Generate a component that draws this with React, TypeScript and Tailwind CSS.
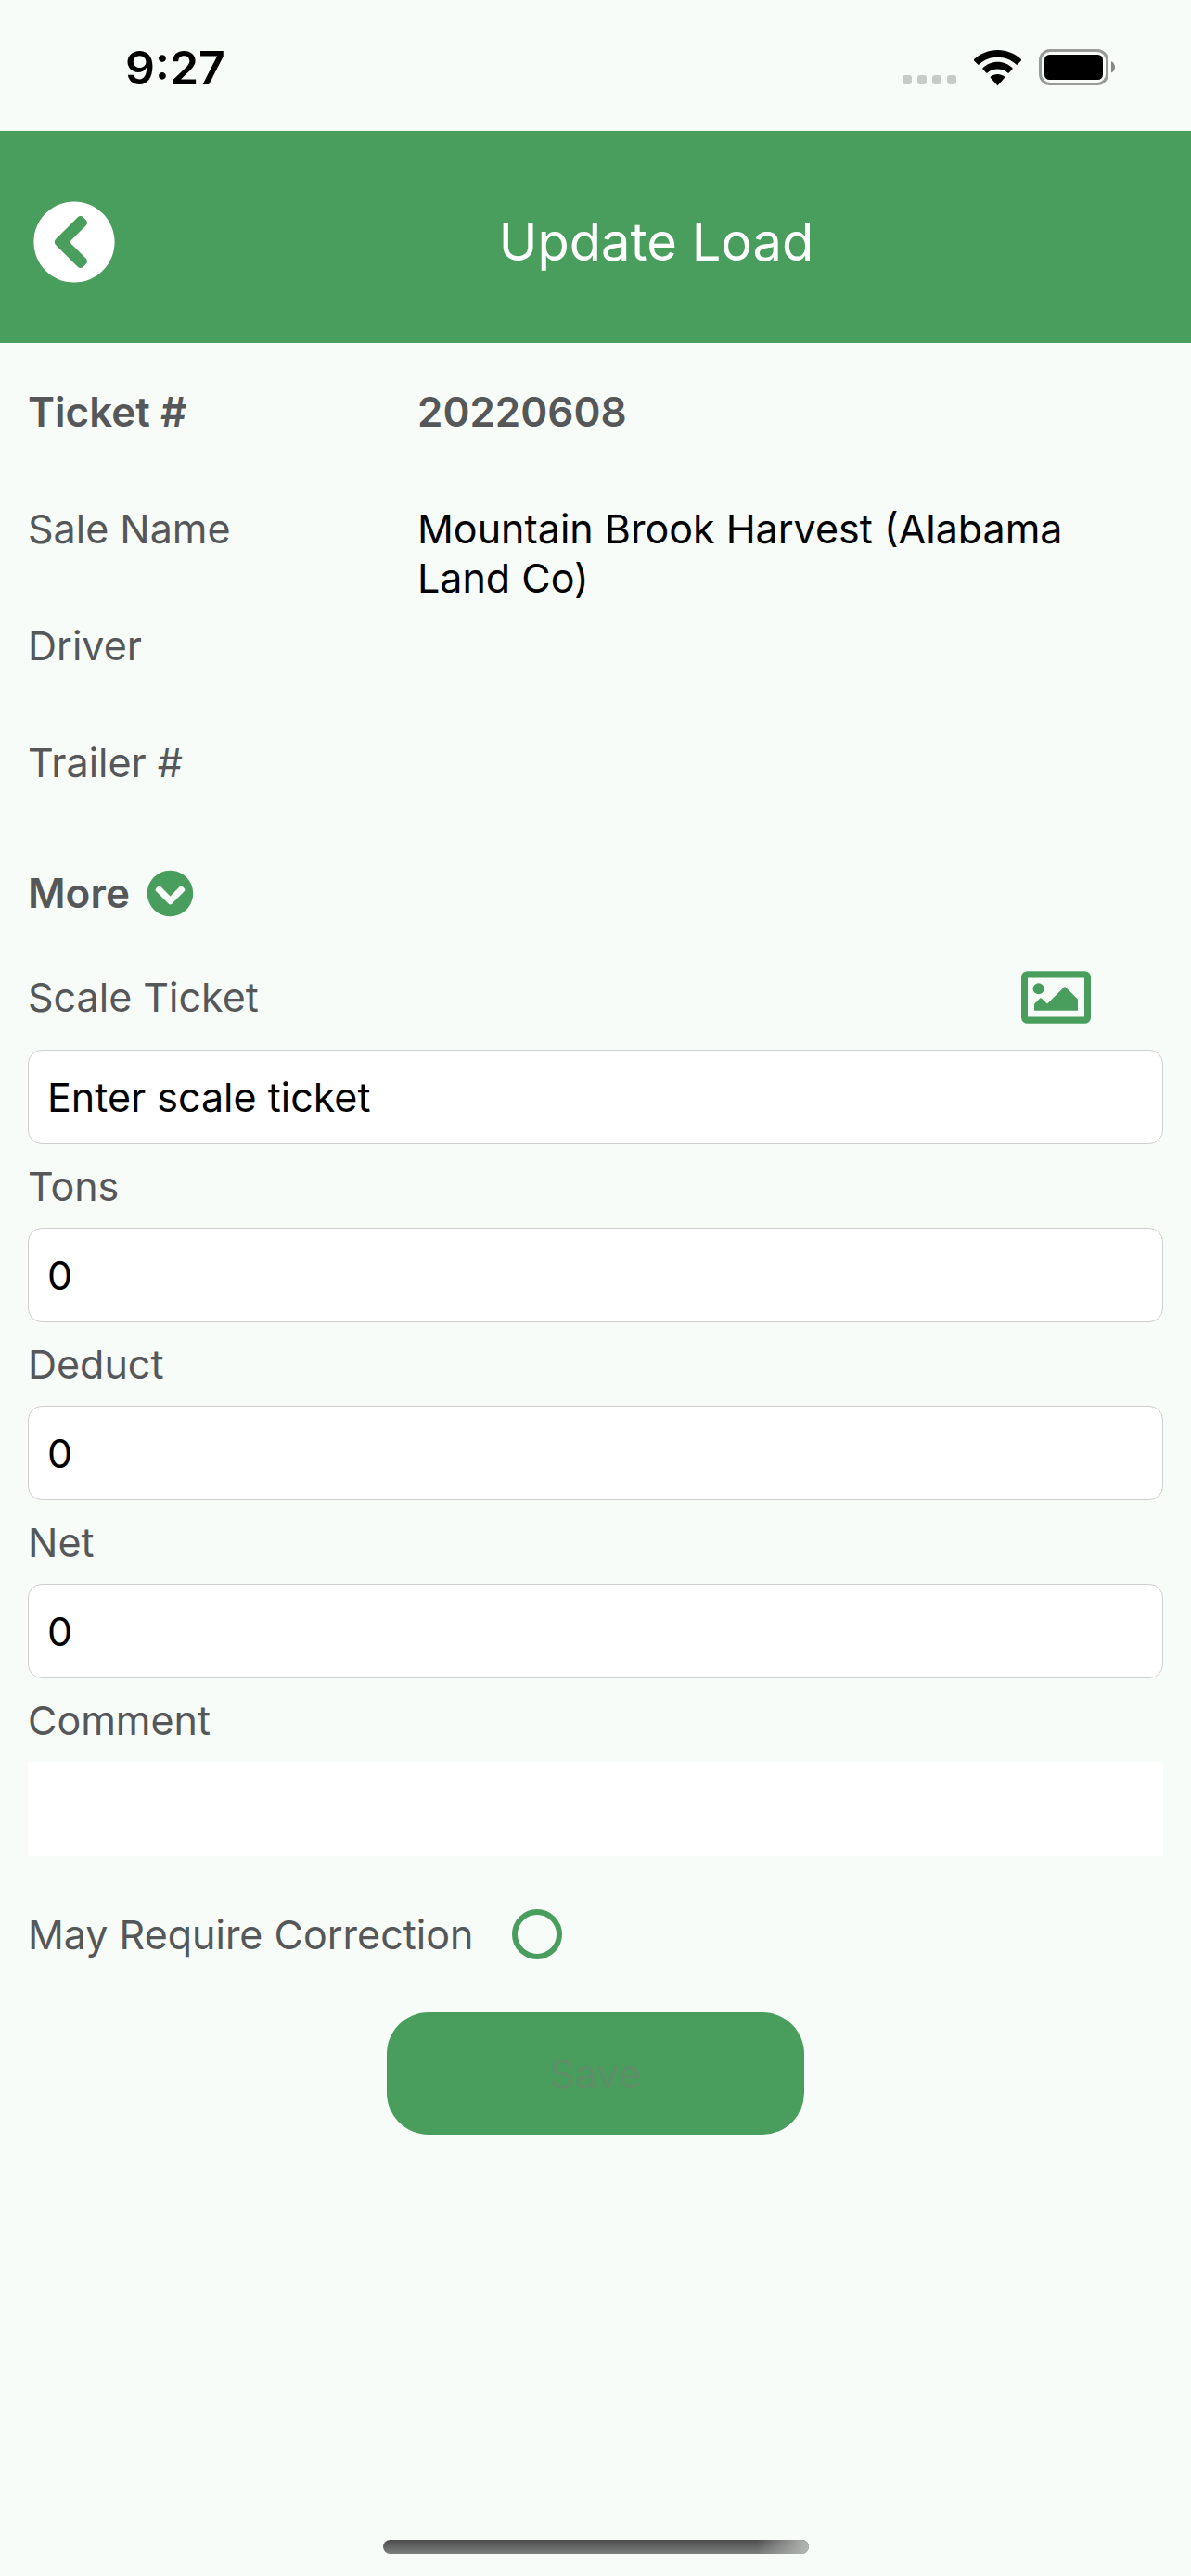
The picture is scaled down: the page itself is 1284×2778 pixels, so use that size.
import { useState } from "react";
import type { ReactNode } from "react";
import { FaChevronCircleDown, FaChevronCircleLeft } from "react-icons/fa";

function WifiIcon() {
  return (
    <svg viewBox="0 0 151 113" className="h-[38px] w-[51px]" aria-hidden="true">
      <path d="M75.500 0C104 0 131 11 151 30c1 1 1 3 0 4L139 46c-1 1-3 1-4 0C119 31 98 23 75.500 23S32 31 16 46c-1 1-3 1-4 0L0 34c-1-1-1-3 0-4C20 11 47 0 75.500 0z" />
      <path d="M75.500 38C93 38 110 45 123 57c1 1 1 3 0 4L112 73c-1 1-3 1-4 0C99 65 88 61 75.500 61S52 65 43 73c-1 1-3 1-4 0L28 61c-1-1-1-3 0-4C41 45 58 38 75.500 38z" />
      <path d="M75.500 77c8 0 16 3 22 8 1 1 1 3 0 4L77 112c-1 1-2 1-3 0L53 89c-1-1-1-3 0-4 6-5 14-8 22.500-8z" />
    </svg>
  );
}

function BatteryIcon() {
  return (
    <svg viewBox="0 0 83 39" className="h-[39px] w-[83px]" aria-hidden="true">
      <rect x="1.500" y="1.500" width="72" height="36" rx="10.500" fill="none" stroke="#979a98" strokeWidth="3" />
      <rect x="6" y="6" width="63" height="27" rx="5.500" />
      <path d="M78 13c2.600 1.300 4 3.700 4 6.300s-1.400 5-4 6.300z" fill="#868986" />
    </svg>
  );
}

function PictureIcon() {
  return (
    <svg viewBox="0 0 225 170" className="h-[57px] w-[75px]" aria-hidden="true">
      <path
        fill="#499e5d"
        fillRule="evenodd"
        d="M20 0H205a20 20 0 0 1 20 20V150a20 20 0 0 1-20 20H20a20 20 0 0 1-20-20V20A20 20 0 0 1 20 0zM21 22V148H204V22z"
      />
      <circle cx="56" cy="57" r="18" fill="#499e5d" />
      <path fill="#499e5d" d="M42 107 60 89q3-3 6 0L84 106 138 53q3-3 6 0L183 92V128H42z" />
    </svg>
  );
}

function StatusBar() {
  return (
    <div className="flex h-[141px] items-start justify-between pt-[53px] pr-[81px] pl-[135px]">
      <span className="text-[50px] leading-10 font-semibold">9:27</span>
      <div className="flex items-end gap-[19px]">
        <div className="flex gap-1.5 pb-px">
          {[0, 1, 2, 3].map((dot) => (
            <span key={dot} className="size-2.5 rounded-[3px] bg-[#c6cbc7]" />
          ))}
        </div>
        <WifiIcon />
        <BatteryIcon />
      </div>
    </div>
  );
}

function DetailRow({ label, value, strong = false }: { label: string; value?: string; strong?: boolean }) {
  return (
    <div className={strong ? "flex min-h-[126px] text-[44px] font-semibold text-[#555759]" : "flex min-h-[126px]"}>
      <dt className="w-[420px] shrink-0 text-[#555759]">{label}</dt>
      <dd className="max-w-[740px]">{value}</dd>
    </div>
  );
}

const inputClass =
  "block h-[102px] w-full rounded-[15px] border border-[#cfcfcf] bg-white px-5 text-black placeholder:text-black placeholder:opacity-100 outline-none";

function Field({
  id,
  label,
  initial = "",
  placeholder,
  action,
}: {
  id: string;
  label: string;
  initial?: string;
  placeholder?: string;
  action?: ReactNode;
}) {
  const [value, setValue] = useState(initial);
  return (
    <div>
      <div className={action ? "flex h-[114px] items-center justify-between pr-[78px]" : "flex h-[90px] items-center"}>
        <label htmlFor={id} className="text-[#555759]">
          {label}
        </label>
        {action}
      </div>
      <input
        id={id}
        type="text"
        value={value}
        placeholder={placeholder}
        onChange={(event) => setValue(event.target.value)}
        className={inputClass}
      />
    </div>
  );
}

export default function App() {
  return (
    <div className="flex min-h-screen flex-col bg-[#f7fcf8] font-['Inter',sans-serif] text-[43px] leading-[53px] text-black">
      <StatusBar />
      <header className="flex h-[229px] items-center bg-[#499e5d] pt-[11px] text-white">
        <button type="button" aria-label="Back" className="ml-[35px] flex w-24 shrink-0">
          <FaChevronCircleLeft className="size-[90px]" />
        </button>
        <h1 className="flex-1 text-center text-[56px] leading-[70px] font-normal">Update Load</h1>
      </header>

      <main className="px-[30px] pt-12">
        <dl>
          <DetailRow label="Ticket #" value="20220608" strong />
          <DetailRow label="Sale Name" value="Mountain Brook Harvest (Alabama Land Co)" />
          <DetailRow label="Driver" />
          <DetailRow label="Trailer #" />
        </dl>

        <button type="button" className="mb-3.5 flex h-[82px] items-center gap-[18px] text-[44px] font-semibold text-[#555759]">
          More
          <FaChevronCircleDown className="size-[51px] text-[#499e5d]" />
        </button>

        <form onSubmit={(event) => event.preventDefault()}>
          <Field
            id="scale-ticket"
            label="Scale Ticket"
            placeholder="Enter scale ticket"
            action={
              <button type="button" aria-label="Attach picture">
                <PictureIcon />
              </button>
            }
          />
          <Field id="tons" label="Tons" initial="0" />
          <Field id="deduct" label="Deduct" initial="0" />
          <Field id="net" label="Net" initial="0" />

          <div className="flex h-[90px] items-center">
            <label htmlFor="comment" className="text-[#555759]">
              Comment
            </label>
          </div>
          <textarea id="comment" className="block h-[102px] w-full resize-none bg-white px-5 py-6 outline-none" />

          <div className="mt-[57px] flex h-[54px] items-center gap-[42px]">
            <label htmlFor="correction" className="text-[#555759]">
              May Require Correction
            </label>
            <input
              id="correction"
              type="checkbox"
              className="size-[54px] appearance-none rounded-full border-[6px] border-[#499e5d] checked:bg-[#499e5d]"
            />
          </div>

          <button
            type="submit"
            className="mx-auto mt-[57px] block h-[132px] w-[450px] rounded-[45px] bg-[#499e5d] text-[#5d9069]"
          >
            Save
          </button>
        </form>
      </main>

      <div className="mt-auto flex justify-center pb-6">
        <div className="h-[15px] w-[459px] rounded-full bg-linear-to-b from-[#4b4d4c] to-[#7d807e]">
          <div className="ml-auto h-full w-14 rounded-r-full bg-linear-to-r from-transparent to-[#b4b8b5]" />
        </div>
      </div>
    </div>
  );
}
